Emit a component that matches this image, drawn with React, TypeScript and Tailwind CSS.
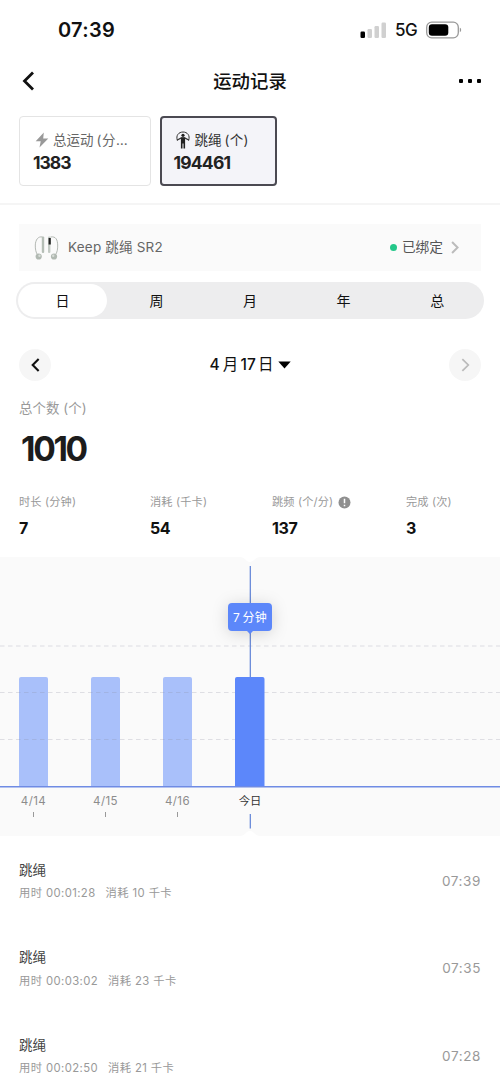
import React from "react";

const stats = [
  { label: "时长 (分钟)", value: "7", width: "w-[131px]" },
  { label: "消耗 (千卡)", value: "54", width: "w-[122px]" },
  { label: "跳频 (个/分)", value: "137", width: "w-[134px]", info: true },
  { label: "完成 (次)", value: "3", width: "w-[75px]" },
];

const records = [
  { duration: "00:01:28", kcal: 10, time: "07:39" },
  { duration: "00:03:02", kcal: 23, time: "07:35" },
  { duration: "00:02:50", kcal: 21, time: "07:28" },
];

const days = [
  { label: "4/14", x: 33.5 },
  { label: "4/15", x: 105.5 },
  { label: "4/16", x: 177.5 },
];

function Chevron({ className, right, width }: { className: string; right?: boolean; width: number }) {
  return (
    <svg viewBox="0 0 12 20" className={className} fill="none" stroke="currentColor" strokeWidth={width}>
      <path d={right ? "M1.5 1.5 10 10l-8.500 8.500" : "M10.500 1.500 2 10l8.500 8.500"} />
    </svg>
  );
}

function StatusBar() {
  return (
    <div className="flex h-[60px] shrink-0 items-center justify-between pr-[38px] pl-[58px]">
      <span className="text-[20px] leading-[24px] font-semibold tracking-[0.3px]">07:39</span>
      <div className="flex items-center">
        <svg width="27" height="18" viewBox="0 0 27 18" className="mr-[2px]">
          <rect x="0.500" y="10.500" width="4.500" height="6.500" rx="1.200" fill="#000" />
          <rect x="7.500" y="8" width="4.500" height="9" rx="1.200" fill="#d0d0d0" />
          <rect x="14.500" y="5" width="4.500" height="12" rx="1.200" fill="#d0d0d0" />
          <rect x="21.500" y="1.500" width="4.500" height="15.500" rx="1.200" fill="#d0d0d0" />
        </svg>
        <span className="ml-[6px] w-[24px] text-[17px] leading-[22px] font-medium tracking-[-0.5px]">5G</span>
        <svg width="36" height="18" viewBox="0 0 36 18" className="ml-[7px]">
          <rect x="0.700" y="1.200" width="31.600" height="15.600" rx="5" fill="none" stroke="#999" strokeWidth="1.300" />
          <rect x="2.800" y="3.200" width="19.500" height="11.600" rx="3.200" fill="#000" />
          <path d="M33.800 6.800c1.800.5 1.800 3.900 0 4.400z" fill="#999" />
        </svg>
      </div>
    </div>
  );
}

function RopeIcon() {
  return (
    <svg width="14" height="18" viewBox="0 0 14 18" fill="none" stroke="#333" strokeLinecap="round">
      <path d="M1.300 9C-.5 4.500 2.800 1 7 1s7.500 3.500 5.700 8" strokeWidth="1" />
      <circle cx="7" cy="4.300" r="1.600" fill="#222" stroke="none" />
      <path d="M1.300 9 5.300 6.900h3.400L12.700 9" strokeWidth="1.200" />
      <path d="M4.900 6.500h4.200V17.500H7.500v-5h-1v5H4.900z" fill="#222" stroke="none" />
    </svg>
  );
}

function DeviceIcon() {
  return (
    <svg width="26" height="26" viewBox="0 0 26 26" fill="none">
      <path d="M8.500 2C4 1 1.500 5 1.300 10c-.1 4 .5 7.500 2.400 10M16.500 2C22 1 23.500 5 23.700 10c.1 4-.5 7.500-2.400 10" stroke="#aab0aa" strokeWidth="0.900" />
      <rect x="7.800" y="1.500" width="2.400" height="16.500" rx="1" fill="#b5beb6" />
      <rect x="14" y="1.500" width="2.400" height="16.500" rx="1" fill="#c3cac4" />
      <rect x="14.600" y="3" width="2.200" height="6.500" fill="#222" />
      <circle cx="4.700" cy="21.500" r="3.100" fill="#b1b9b2" />
      <circle cx="20" cy="21.500" r="3.100" fill="#b1b9b2" />
      <circle cx="5.500" cy="20.700" r="1.200" fill="#d8ddd8" />
      <circle cx="19.200" cy="20.700" r="1.200" fill="#d8ddd8" />
    </svg>
  );
}

function Chart() {
  return (
    <svg width="500" height="279" viewBox="0 557 500 279" className="mt-[18px] block shrink-0 bg-[#fafafa]">
      <path d="M240 557h20c-5 0-6 5-10 5s-5-5-10-5zM240 836h20c-5 0-6-5-10-5s-5 5-10 5z" fill="#fff" />
      {days.map((d) => (
        <path key={d.label} d={`M${d.x - 14.5} 786.500v-107.500q0-2 2-2h25q2 0 2 2v107.500z`} fill="#a9c0fa" />
      ))}
      {[646, 692.5, 739.5].map((y) => (
        <path key={y} d={`M0 ${y}H500`} stroke="#8c8ca0" strokeOpacity="0.25" strokeDasharray="4.500 3.500" />
      ))}
      <path d="M250.300 566v111M250.300 814v14.500" stroke="#5f82d6" strokeWidth="1.200" />
      <path d="M235 786.500v-107.500q0-2 2-2h25.500q2 0 2 2v107.500z" fill="#5c87fa" />
      <path d="M0 786.800H500" stroke="#6f8be4" strokeWidth="1.500" />
      {days.map((d) => (
        <g key={d.label}>
          <text x={d.x} y="804.500" textAnchor="middle" fontSize="11.500" fill="#8c8c8c" letterSpacing="0.400">
            {d.label}
          </text>
          <path d={`M${d.x} 812v5`} stroke="#999" />
        </g>
      ))}
      <text x="250" y="804.500" textAnchor="middle" fontSize="11.300" fill="#333">今日</text>
      <g className="drop-shadow-[0_2px_8px_rgba(0,0,0,0.16)]">
        <path d="M232 603h36q4 0 4 4v20q0 4-4 4h-15l-3 3-3-3h-15q-4 0-4-4v-20q0-4 4-4z" fill="#5c87fa" />
      </g>
      <text x="233" y="621.500" fontSize="12" fill="#fff">7</text>
      <text x="242.500" y="621.500" fontSize="12" fill="#fff" letterSpacing="0.300">分钟</text>
    </svg>
  );
}

export default function App() {
  return (
    <div className="flex h-[1082px] w-[500px] flex-col overflow-hidden bg-white font-['Inter','Noto_Sans_CJK_SC',sans-serif] whitespace-nowrap text-[#111]">
      <StatusBar />

      <header className="flex h-[42px] shrink-0 items-center justify-between pr-[19px] pl-[22px]">
        <Chevron className="h-[20px] w-[13px]" width={2.8} />
        <h1 className="ml-[6px] text-[18.400px] leading-[24px] font-medium">运动记录</h1>
        <div className="flex gap-[5px]">
          <i className="size-[4px] rounded-[1px] bg-black" />
          <i className="size-[4px] rounded-[1px] bg-black" />
          <i className="size-[4px] rounded-[1px] bg-black" />
        </div>
      </header>

      <section className="flex h-[103px] shrink-0 gap-[9px] border-b-2 border-[#f5f5f5] pt-[14px] pl-[19px]">
        <div className="h-[70px] w-[131.500px] rounded-[4px] border border-[#e4e4e4] pt-[14px] pl-[13px]">
          <div className="flex h-[18px] items-center text-[13.500px] text-[#666]">
            <svg width="14" height="16" viewBox="0 0 14 16" className="ml-[2px]">
              <path d="M8.800.5.700 9.300h5L4.500 15.500l8.800-9H8.200z" fill="#999" />
            </svg>
            <span className="ml-[4px]">总运动</span>
            <span className="ml-[3px] tracking-[0.5px]">(分…</span>
          </div>
          <div className="mt-[3px] text-[17.500px] leading-[22px] font-bold tracking-[-1px] text-[#222]">1383</div>
        </div>
        <div className="h-[70px] w-[117px] rounded-[4px] border-2 border-[#4b4a52] bg-[#f4f4f9] pt-[13px] pl-[12px]">
          <div className="flex h-[18px] items-center text-[13.500px] text-[#333]">
            <span className="ml-[2px]"><RopeIcon /></span>
            <span className="ml-[5px]">跳绳</span>
            <span className="ml-[3px] tracking-[0.3px]">(个)</span>
          </div>
          <div className="mt-[3px] text-[17.500px] leading-[22px] font-bold tracking-[-0.8px] text-[#222]">194461</div>
        </div>
      </section>

      <section className="mx-[19px] mt-[19px] flex h-[47px] shrink-0 items-center bg-[#fafafa] pr-[21px] pl-[15px]">
        <DeviceIcon />
        <span className="ml-[8px] text-[13.500px] tracking-[0.2px] text-[#666]">Keep 跳绳 SR2</span>
        <i className="ml-auto size-[7px] rounded-full bg-[#24c789]" />
        <span className="ml-[5px] text-[13.700px] text-[#555]">已绑定</span>
        <Chevron className="mr-[1px] ml-[8px] h-[13px] w-[8px] text-[#bbb]" right width={3} />
      </section>

      <nav className="mx-[16px] mt-[11px] grid h-[37px] shrink-0 grid-cols-5 items-center rounded-full bg-[#ededee] text-center text-[14px]">
        <span className="ml-[2px] h-[33px] w-[89px] rounded-full bg-white leading-[33px]">日</span>
        <span>周</span>
        <span>月</span>
        <span>年</span>
        <span>总</span>
      </nav>

      <section className="mx-[19px] mt-[29px] flex h-[33px] shrink-0 items-center justify-between">
        <button className="flex size-[32px] items-center justify-center rounded-full bg-[#f6f6f6]">
          <Chevron className="h-[14px] w-[9px]" width={3} />
        </button>
        <div className="flex items-center gap-[4px] text-[15.500px] tracking-[0.1px]">
          <span><span className="mr-[3px] font-medium">4</span>月<span className="mx-[2px] font-medium">17</span>日</span>
          <svg width="13" height="8" viewBox="0 0 13 8"><path d="M.3.500h12.400L6.500 7.500z" /></svg>
        </div>
        <button className="flex size-[32px] items-center justify-center rounded-full bg-[#f6f6f6] text-[#bbb]">
          <Chevron className="h-[14px] w-[9px]" right width={2.5} />
        </button>
      </section>

      <section className="shrink-0 px-[19px] pt-[17px]">
        <div className="text-[13.400px] leading-[20px] tracking-[0.1px] text-[#999]">总个数 (个)</div>
        <div className="mt-[11px] ml-[2px] text-[33.500px] leading-[40px] font-bold tracking-[-2.300px] text-[#1c1c1c]">1010</div>
      </section>

      <section className="mt-[25px] flex shrink-0 pl-[19px]">
        {stats.map((s) => (
          <div key={s.label} className={s.width}>
            <div className="flex h-[16px] items-center text-[11.200px] tracking-[0.15px] text-[#999]">
              {s.label}
              {s.info && (
                <svg width="13" height="13" viewBox="0 0 13 13" className="ml-[5px]">
                  <circle cx="6.500" cy="6.500" r="6" fill="#8f8f8f" />
                  <path d="M6.500 2.800v4.500M6.500 8.700v1.500" stroke="#fff" strokeWidth="1.500" />
                </svg>
              )}
            </div>
            <div className="mt-[7px] text-[16px] leading-[22px] font-bold tracking-[-0.4px]">{s.value}</div>
          </div>
        ))}
      </section>

      <Chart />

      <ul className="shrink-0">
        {records.map((r) => (
          <li key={r.time} className="flex h-[87.500px] items-start justify-between px-[19px] pt-[23.500px]">
            <div>
              <div className="text-[13.500px] leading-[20px] text-[#444]">跳绳</div>
              <div className="mt-[5.500px] flex gap-[10px] text-[11.300px] leading-[16px] tracking-[0.4px] text-[#999]">
                <span>用时 {r.duration}</span>
                <span>消耗 {r.kcal} 千卡</span>
              </div>
            </div>
            <time className="mt-[11px] text-[13.500px] leading-[20px] tracking-[0.6px] text-[#999]">{r.time}</time>
          </li>
        ))}
      </ul>
    </div>
  );
}
